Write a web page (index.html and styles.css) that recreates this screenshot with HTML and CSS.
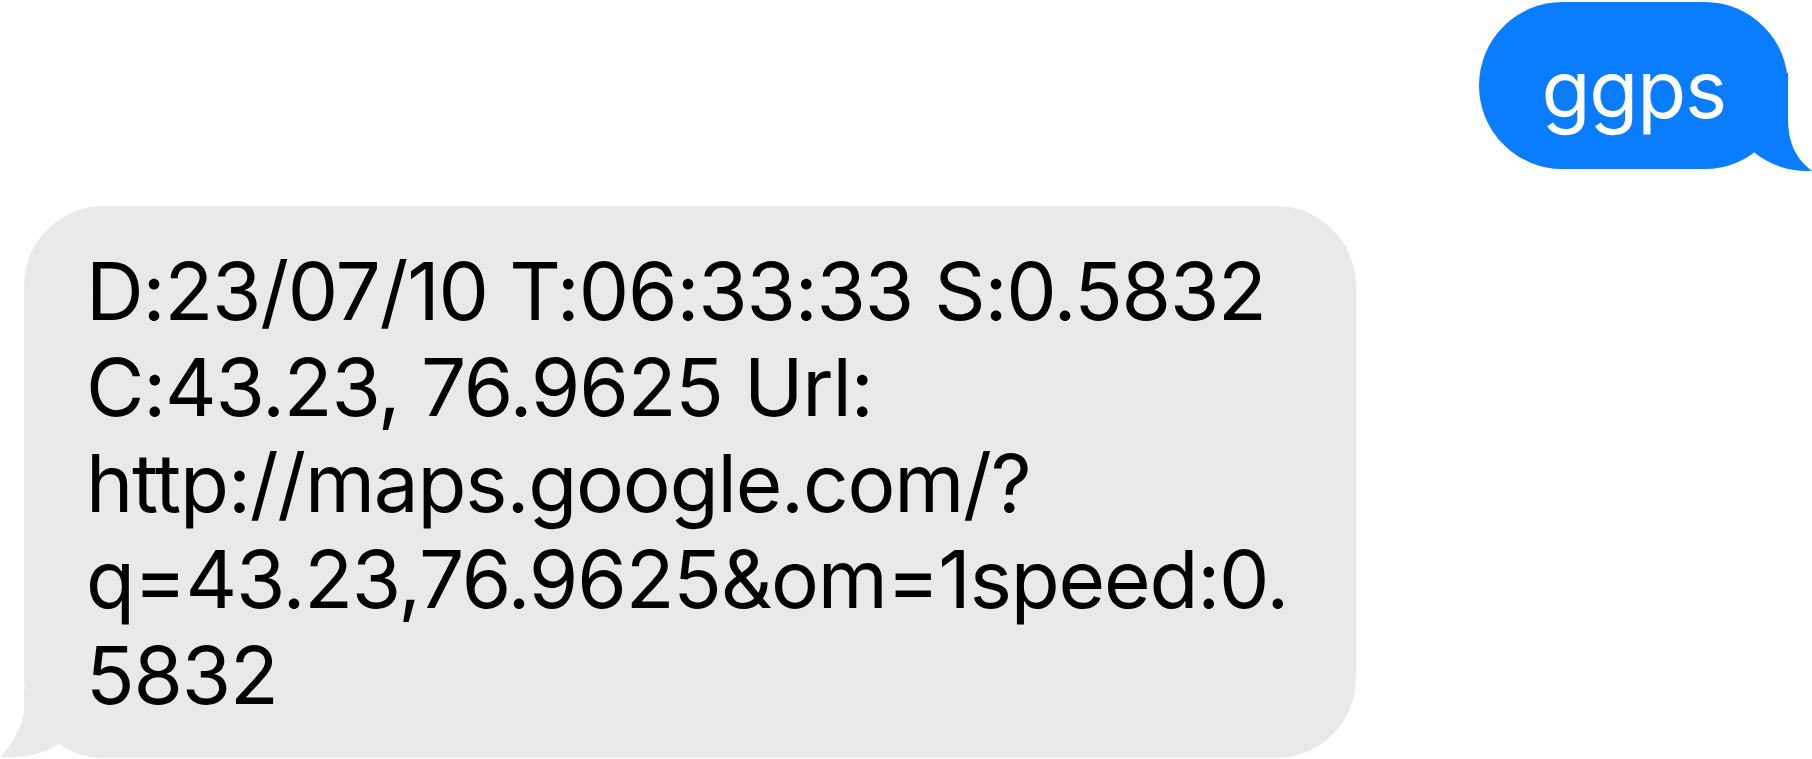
FILE: index.html
```html
<!DOCTYPE html>
<html lang="en">
<head>
<meta charset="utf-8">
<title>Messages</title>
<link rel="stylesheet" href="styles.css">
</head>
<body>
<div class="thread">
  <div class="row row-sent">
    <div class="bubble sent">
      <span class="msg">ggps</span>
      <svg class="tail tail-sent" viewBox="0 0 80 110" width="80" height="110" aria-hidden="true">
        <path d="M56,10 L56,55 C56,80 64,96 80,108 C58,109 38,102 23,90 L8,67 L8,10 Z" fill="#0a7cff"/>
      </svg>
    </div>
  </div>
  <div class="row row-recv">
    <div class="bubble recv">
      <svg class="tail tail-recv" viewBox="0 0 84 84" width="84" height="84" aria-hidden="true">
        <path d="M24,12 L24,32 C24,47 10,70 0,79 C25,81 45,75 60,65 L75,52 L75,12 Z" fill="#e9e9eb"/>
      </svg>
      <span class="msg">D:23/07/10 T:06:33:33 S:0.5832<br>C:43.23, 76.9625 Url:<br>http://maps.google.com/?<br>q=43.23,76.9625&amp;om=1speed:0.<br>5832</span>
    </div>
  </div>
</div>
</body>
</html>
```
FILE: styles.css
```css
html, body {
  margin: 0;
  padding: 0;
  background: #ffffff;
}

body {
  font-family: "Inter", "Noto Sans", "Liberation Sans", sans-serif;
  overflow: hidden;
}

.thread {
  display: flex;
  flex-direction: column;
  gap: 37px;
  padding: 2px 0 0 0;
}

.row {
  display: flex;
}

.row-sent {
  justify-content: flex-end;
  padding-right: 24px;
}

.row-recv {
  justify-content: flex-start;
  padding-left: 24px;
}

.bubble {
  position: relative;
  box-sizing: border-box;
  font-size: 80px;
  line-height: 96px;
  letter-spacing: -1.2px;
}

.msg {
  position: relative;
  z-index: 1;
}

.sent {
  background: #0a7cff;
  color: #ffffff;
  border-radius: 84px;
  padding: 39px 62px 32px 62px;
}

.recv {
  background: #e9e9eb;
  color: #000000;
  border-radius: 80px;
  width: 1332px;
  padding: 37px 40px 35px 62px;
}

.tail {
  position: absolute;
  z-index: 0;
  display: block;
}

.tail-sent {
  right: -24px;
  bottom: -4px;
}

.tail-recv {
  left: -24px;
  bottom: -4px;
}
```
